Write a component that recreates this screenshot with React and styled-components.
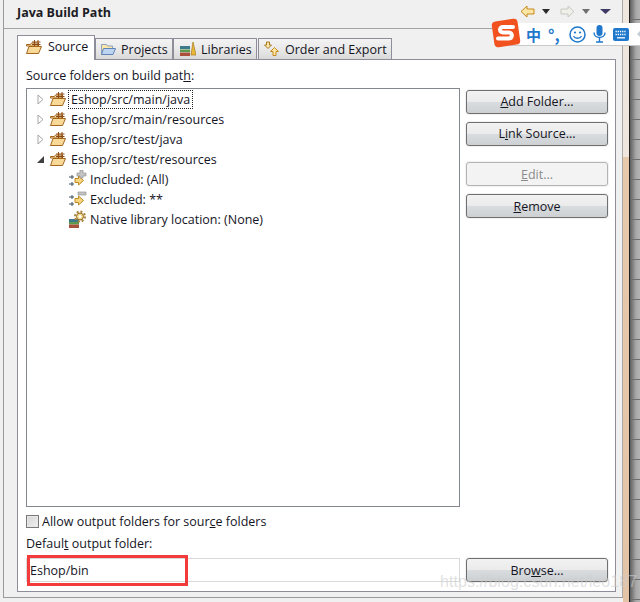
import React from "react";
import styled, { createGlobalStyle } from "styled-components";

const GlobalStyle = createGlobalStyle`
  html, body {
    margin: 0;
    padding: 0;
    background: #f0f0f0;
  }
  body {
    font-family: "Open Sans", "Noto Sans", "Liberation Sans", sans-serif;
    font-size: 12.5px;
    color: #15151f;
  }
`;

const Page = styled.div`
  position: relative;
  display: flex;
  width: 640px;
  height: 602px;
  overflow: hidden;
  background: #f0f0f0;
`;

const Dialog = styled.div`
  display: flex;
  flex-direction: column;
  width: 620px;
  height: 598px;
  margin-left: 3px;
  border-left: 1px solid #9a9a9a;
  border-right: 1px solid #a8a8a8;
  border-bottom: 1px solid #9a9a9a;
  box-sizing: border-box;
`;

const TitleBar = styled.div`
  display: flex;
  align-items: center;
  justify-content: space-between;
  height: 29px;
  flex: none;
  box-sizing: border-box;
  padding: 0 11px 5px 13px;
  border-bottom: 1px solid #a3a3a3;
`;

const Title = styled.h1`
  margin: 1px 0 0;
  font-size: 12.5px;
  font-weight: 700;
  color: #1c1c24;
`;

const History = styled.div`
  display: flex;
  align-items: center;
  gap: 10px;
`;

const HistoryGroup = styled.div`
  display: flex;
  align-items: center;
  gap: 7px;
`;

const ArrowSvg = styled.svg`
  transform: ${(p) => (p.$flip ? "scaleX(-1)" : "none")};
`;

const Folder = styled.div`
  display: flex;
  flex-direction: column;
  flex: 1;
  min-height: 0;
  margin: 6px 6px 5px 13px;
`;

const TabStrip = styled.div`
  display: flex;
  align-items: flex-end;
  height: 25px;
  flex: none;
  position: relative;
  z-index: 1;
`;

const Tab = styled.div`
  display: flex;
  align-items: center;
  gap: ${(p) => p.$iconGap || 5}px;
  box-sizing: border-box;
  width: ${(p) => p.$width}px;
  height: ${(p) => (p.$active ? 25 : 22)}px;
  padding: ${(p) => (p.$active ? "0 0 3px" : "0")};
  padding-left: ${(p) => p.$pad}px;
  margin-right: ${(p) => p.$gap || 0}px;
  border: 1px solid #8e8e9a;
  border-bottom: ${(p) => (p.$active ? "none" : "1px solid #8e8e9a")};
  background: ${(p) =>
    p.$active ? "#fff" : "linear-gradient(#f3f3f3, #e9e9e9 50%, #d9d9d9)"};
`;

const Pane = styled.div`
  display: flex;
  flex-direction: column;
  flex: 1;
  min-height: 0;
  margin-top: -1px;
  padding: 7px 7px 9px 8px;
  background: #fff;
  border: 1px solid #8e8e9a;
`;

const Caption = styled.div`
  height: 17px;
  line-height: 17px;
  flex: none;
  margin-top: ${(p) => p.$before || 0}px;
  margin-bottom: ${(p) => p.$after || 0}px;
`;

const Mnemonic = styled.span`
  text-decoration: underline;
  text-underline-offset: 1px;
`;

const Split = styled.div`
  display: flex;
  gap: 6px;
  flex: 1;
  min-height: 0;
`;

const TreeBox = styled.div`
  width: 434px;
  box-sizing: border-box;
  flex: none;
  border: 1px solid #828790;
  background: #fff;
`;

const Row = styled.div`
  display: flex;
  align-items: center;
  height: 20px;
  padding-left: ${(p) => p.$indent}px;
`;

const Arrow = styled.span`
  display: flex;
  width: 9px;
  justify-content: center;
  margin-right: 4px;
`;

const RowLabel = styled.span`
  margin-left: ${(p) => p.$gap}px;
  padding: 0 2px;
  line-height: 17px;
  outline: ${(p) => (p.$focused ? "1px dotted #222" : "none")};
`;

const ButtonColumn = styled.div`
  display: flex;
  flex-direction: column;
  width: 142px;
  padding-top: 2px;
`;

const Button = styled.div`
  display: flex;
  align-items: center;
  justify-content: center;
  box-sizing: border-box;
  flex: none;
  width: 142px;
  height: 24px;
  padding-bottom: ${(p) => p.$textUp || 0}px;
  padding-top: ${(p) => p.$textDown || 0}px;
  margin-top: ${(p) => p.$top || 0}px;
  border: 1px solid ${(p) => (p.$disabled ? "#b4b4b4" : "#6f6f6f")};
  border-radius: 3px;
  color: ${(p) => (p.$disabled ? "#8b8b8b" : "#15151f")};
  background: ${(p) =>
    p.$disabled
      ? "#f3f3f3"
      : "linear-gradient(#f2f2f2, #ebebeb 50%, #d8dcde 51%, #cdd1d3)"};
  box-shadow: 0 0 0 1px #f2f2f2;
`;

const CheckRow = styled.div`
  display: flex;
  align-items: center;
  gap: 3px;
  height: 18px;
  margin-top: 5px;
  flex: none;
`;

const CheckBox = styled.span`
  width: 11px;
  height: 11px;
  border: 1px solid #7a7a7a;
  background: linear-gradient(135deg, #d4d4d4, #f2f2f2);
  box-shadow: inset 0 0 0 1px #e8e8e8;
`;

const OutputRow = styled.div`
  display: flex;
  gap: 6px;
  flex: none;
  margin-top: 6px;
`;

const OutputField = styled.div`
  position: relative;
  display: flex;
  align-items: center;
  box-sizing: border-box;
  flex: none;
  width: 434px;
  height: 24px;
  padding-left: 3px;
  border: 1px solid #d9d9d9;
`;

const Highlight = styled.div`
  position: absolute;
  left: 0;
  top: -4px;
  width: 161px;
  height: 31px;
  box-sizing: border-box;
  border: 3px solid #f33b3b;
`;

const Edge = styled.div`
  display: flex;
  flex: 1;
`;

const TanStrip = styled.div`
  width: 6px;
  background: linear-gradient(
    #efe7de 0,
    #efe7de 157px,
    #e6c8aa 157px,
    #e4c4a6 100%
  );
`;

const Backdrop = styled.div`
  flex: 1;
  border-left: 1px solid #222;
  background-color: #8a8a8a;
  background-image: repeating-linear-gradient(
      transparent 0,
      transparent 19px,
      #6f6f6f 19px,
      #6f6f6f 20px
    ),
    linear-gradient(90deg, #5f5f5f, #a8a8a8 60%, #b4b4b4);
`;

const ImeBar = styled.div`
  position: absolute;
  left: 506px;
  top: 23px;
  width: 134px;
  height: 22px;
  background: #fff;
  border-bottom: 1px solid #c9c9c9;
  color: #1f78cc;
`;

const ImeLogo = styled.svg`
  position: absolute;
  left: -15px;
  top: -5px;
`;

const ImeItem = styled.span`
  position: absolute;
  top: 0;
  left: ${(p) => p.$left}px;
  height: 22px;
  display: flex;
  align-items: center;
  font-family: "Noto Sans CJK SC", "Noto Sans", sans-serif;
  font-size: ${(p) => p.$size || 14}px;
  font-weight: 700;
  line-height: 1;
  color: ${(p) => p.$color || "inherit"};
`;

const Watermark = styled.div`
  position: absolute;
  left: 440px;
  top: 573px;
  font-family: "Liberation Sans", Arial, sans-serif;
  font-size: 16px;
  white-space: nowrap;
  letter-spacing: 0.05px;
  color: rgba(205, 205, 205, 0.6);
  pointer-events: none;
`;

const SourceFolderIcon = () => (
  <svg width="17" height="16" viewBox="0 0 17 16">
    <path d="M1.5 5.500h4l1-1.500h7v3h-12z" fill="#fbe7b7" stroke="#a5651c" />
    <path d="M1.500 14.500L4 7.500h12.500l-3 7z" fill="#f8d998" stroke="#a5651c" />
    <path d="M9.500 1v6M13 1v6M7 3h8.500M7 5.500h8.500" stroke="#8c4a14" fill="none" />
  </svg>
);

const ProjectsIcon = () => (
  <svg width="16" height="16" viewBox="0 0 16 16">
    <path d="M1.500 3.500h5l1 1.500h5v8h-11z" fill="#fbe7a8" stroke="#8ea0bd" />
    <path d="M3.500 7.500h12l-2.500 6h-11.500z" fill="#bcd4ef" stroke="#5f84b8" />
  </svg>
);

const LibrariesIcon = () => (
  <svg width="16" height="16" viewBox="0 0 16 16">
    <path d="M0 5h10v3H0z" fill="#3d7a8e" />
    <path d="M0 8.500h10v2.500H0z" fill="#5b9a4b" />
    <path d="M0 11.500h10V15H0z" fill="#a8503a" />
    <path d="M11 14l2-13 3 13z" fill="#eab93a" stroke="#a87a16" strokeWidth=".7" />
  </svg>
);

const OrderIcon = () => (
  <svg width="16" height="16" viewBox="0 0 16 16">
    <path d="M2.500 1h3v3h2L4 7.500.5 4h2z" fill="#fbe6a6" stroke="#a87a26" />
    <path d="M10.500 6.500L14.500 10.500h-2.500v4h-3v-4H6.500z" fill="#fbe6a6" stroke="#c58a1c" />
  </svg>
);

const FilterIcon = ({ sign }) => (
  <svg width="18" height="18" viewBox="0 0 18 18">
    <path d="M0 7h5M0 14h5M3 5v4M3 12v4" stroke="#3f5060" fill="none" />
    <path d="M6 8.500h3.500V6l5 4.500-5 4.500v-2.500H6z" fill="#f6d680" stroke="#c08a1e" />
    <path
      d={sign === "plus" ? "M11 0h3v3h3v3h-3v2h-3V6H8V3h3z" : "M9 2h8v3H9z"}
      fill="#c4c4c4"
      stroke="#8a8a8a"
      strokeWidth=".6"
    />
  </svg>
);

const NativeIcon = () => (
  <svg width="18" height="18" viewBox="0 0 18 18">
    <path d="M0 9h10v3H0z" fill="#3d7a8e" />
    <path d="M0 12h10v2.500H0z" fill="#5b9a4b" />
    <path d="M0 14.500h10V18H0z" fill="#a8503a" />
    <circle cx="11" cy="6.500" r="3.500" fill="#f0d58c" stroke="#8f6a26" />
    <circle cx="11" cy="6.500" r="5" fill="none" stroke="#a88238" strokeWidth="2" strokeDasharray="2 1.900" />
    <circle cx="11" cy="6.500" r="1.500" fill="#fff" />
  </svg>
);

const Expand = ({ open }) =>
  open ? (
    <svg width="9" height="9" viewBox="0 0 9 9">
      <path d="M8 1v7H1z" fill="#404040" />
    </svg>
  ) : (
    <svg width="7" height="11" viewBox="0 0 7 11">
      <path d="M1 1l5 4.500-5 4.500z" fill="#fff" stroke="#a6a6a6" />
    </svg>
  );

const NavArrow = ({ flip, fill, stroke }) => (
  <ArrowSvg $flip={flip} width="15" height="13" viewBox="0 0 15 13">
    <path d="M1 6.500L7 1v3h7v5H7v3z" fill={fill} stroke={stroke} />
  </ArrowSvg>
);

const Caret = ({ color, wide }) => (
  <svg width={wide ? 11 : 8} height="5" viewBox={wide ? "0 0 11 5" : "0 0 8 5"}>
    <path d={wide ? "M0 0h11L5.500 5z" : "M0 0h8L4 5z"} fill={color} />
  </svg>
);

const tree = [
  { label: "Eshop/src/main/java", focused: true },
  { label: "Eshop/src/main/resources" },
  { label: "Eshop/src/test/java" },
  { label: "Eshop/src/test/resources", open: true },
];

const details = [
  { label: "Included: (All)", icon: <FilterIcon sign="plus" /> },
  { label: "Excluded: **", icon: <FilterIcon sign="minus" /> },
  { label: "Native library location: (None)", icon: <NativeIcon /> },
];

export default function App() {
  return (
    <Page>
      <GlobalStyle />
      <Dialog>
        <TitleBar>
          <Title>Java Build Path</Title>
          <History>
            <HistoryGroup>
              <NavArrow fill="#fbe6a6" stroke="#c58a1c" />
              <Caret color="#2a2a2a" />
            </HistoryGroup>
            <HistoryGroup>
              <NavArrow flip fill="#f0f0ea" stroke="#c8c8c0" />
              <Caret color="#707070" />
            </HistoryGroup>
            <Caret color="#3e3a66" wide />
          </History>
        </TitleBar>
        <Folder>
          <TabStrip>
            <Tab $active $width={78} $pad={7} $iconGap={6}>
              <SourceFolderIcon />
              Source
            </Tab>
            <Tab $width={78} $pad={4}>
              <ProjectsIcon />
              Projects
            </Tab>
            <Tab $width={84} $gap={1} $pad={6}>
              <LibrariesIcon />
              Libraries
            </Tab>
            <Tab $width={134} $pad={5}>
              <OrderIcon />
              Order and Export
            </Tab>
          </TabStrip>
          <Pane>
            <Caption $after={4}>
              Source folders on build pat<Mnemonic>h</Mnemonic>:
            </Caption>
            <Split>
              <TreeBox>
                {tree.map((item) => (
                  <Row key={item.label} $indent={9}>
                    <Arrow>
                      <Expand open={item.open} />
                    </Arrow>
                    <SourceFolderIcon />
                    <RowLabel $gap={3} $focused={item.focused}>
                      {item.label}
                    </RowLabel>
                  </Row>
                ))}
                {details.map((item) => (
                  <Row key={item.label} $indent={42}>
                    {item.icon}
                    <RowLabel $gap={1}>{item.label}</RowLabel>
                  </Row>
                ))}
              </TreeBox>
              <ButtonColumn>
                <Button $textUp={1}>
                  <span>
                    <Mnemonic>A</Mnemonic>dd Folder...
                  </span>
                </Button>
                <Button $top={8} $textUp={1}>
                  <span>
                    L<Mnemonic>i</Mnemonic>nk Source...
                  </span>
                </Button>
                <Button $top={16} $disabled>
                  <span>
                    <Mnemonic>E</Mnemonic>dit...
                  </span>
                </Button>
                <Button $top={8} $textDown={1}>
                  <span>
                    <Mnemonic>R</Mnemonic>emove
                  </span>
                </Button>
              </ButtonColumn>
            </Split>
            <CheckRow>
              <CheckBox />
              <span>
                Allow output folders for sour<Mnemonic>c</Mnemonic>e folders
              </span>
            </CheckRow>
            <Caption $before={5}>
              Defaul<Mnemonic>t</Mnemonic> output folder:
            </Caption>
            <OutputRow>
              <OutputField>
                Eshop/bin
                <Highlight />
              </OutputField>
              <Button $textDown={1}>
                <span>
                  Bro<Mnemonic>w</Mnemonic>se...
                </span>
              </Button>
            </OutputRow>
          </Pane>
        </Folder>
      </Dialog>
      <Edge>
        <TanStrip />
        <Backdrop />
      </Edge>
      <ImeBar>
        <ImeLogo width="30" height="30" viewBox="0 0 30 30">
          <rect x="2" y="2" width="26" height="26" rx="4" fill="#f2521e" transform="rotate(-8 15 15)" />
          <path d="M22 9H12c-4 0-4 5.500 0 5.500h6c4 0 4 6-1 6H7" fill="none" stroke="#fff" strokeWidth="4" strokeLinecap="round" />
        </ImeLogo>
        <ImeItem $left={20} $size={15}>中</ImeItem>
        <ImeItem $left={42} $size={16}>°,</ImeItem>
        <ImeItem $left={63}>
          <svg width="17" height="17" viewBox="0 0 17 17">
            <circle cx="8.500" cy="8.500" r="7.500" fill="none" stroke="currentColor" strokeWidth="1.500" />
            <circle cx="6" cy="6.500" r="1.100" fill="currentColor" />
            <circle cx="11" cy="6.500" r="1.100" fill="currentColor" />
            <path d="M4.500 10c1.500 3 6.500 3 8 0" fill="none" stroke="currentColor" strokeWidth="1.300" />
          </svg>
        </ImeItem>
        <ImeItem $left={87}>
          <svg width="13" height="18" viewBox="0 0 13 18">
            <rect x="3.500" y="0" width="6" height="11" rx="3" fill="currentColor" />
            <path d="M1 7.500c0 6.500 11 6.500 11 0M6.500 13v4M3 17h7" fill="none" stroke="currentColor" strokeWidth="1.400" />
          </svg>
        </ImeItem>
        <ImeItem $left={107}>
          <svg width="16" height="13" viewBox="0 0 16 13">
            <rect x="0" y="0" width="16" height="13" rx="2" fill="currentColor" />
            <path d="M2.500 3.500h11M2.500 6.500h11" stroke="#fff" strokeWidth="1.300" strokeDasharray="1.300 .9" />
            <path d="M4 9.800h8" stroke="#fff" strokeWidth="1.300" />
          </svg>
        </ImeItem>
        <ImeItem $left={131} $color="#c4ccd6">
          <svg width="5" height="12" viewBox="0 0 5 12">
            <path d="M5 1L0 6l5 5z" fill="currentColor" />
          </svg>
        </ImeItem>
      </ImeBar>
      <Watermark>https://blog.csdn.net/leo187</Watermark>
    </Page>
  );
}
